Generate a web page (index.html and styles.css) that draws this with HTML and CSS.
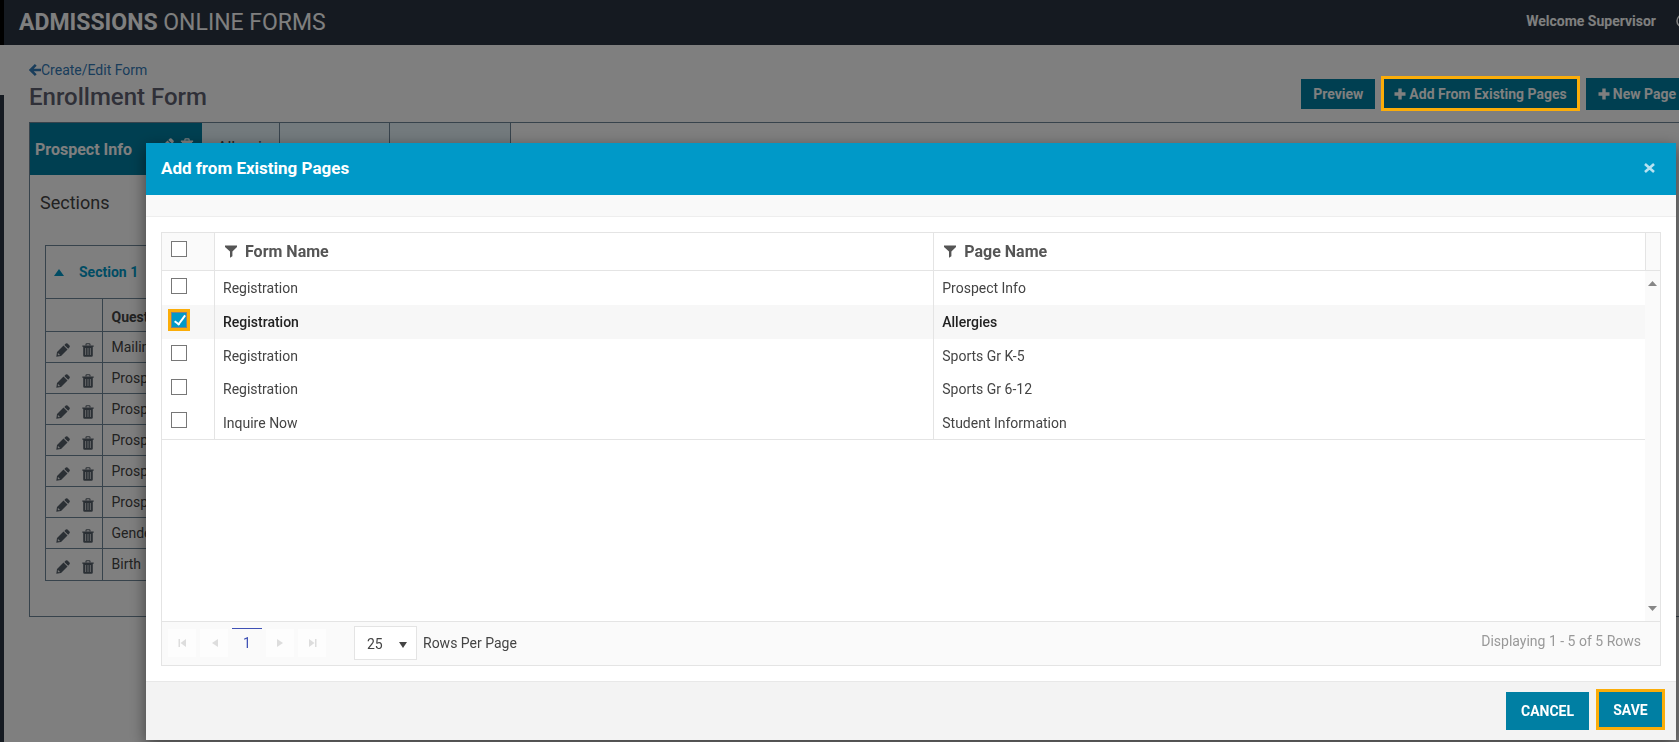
FILE: index.html
```html
<!DOCTYPE html>
<html lang="en">
<head>
  <meta charset="UTF-8">
  <meta name="viewport" content="width=device-width, initial-scale=1.0">
  <title>Admissions Online Forms</title>
  <link rel="stylesheet" href="styles.css">
</head>
<body>
  <!-- shared icons -->
  <svg class="icon-defs" aria-hidden="true">
    <symbol id="icon-pencil" viewBox="0 0 14 14">
      <path d="M0.3 13.7 L1 9 L7.5 2.6 L11.5 6.5 L5 13 Z M8.3 1.9 L9.8 0.6 Q10.6 -0.1 11.5 0.6 L13.5 2.5 Q14.2 3.3 13.5 4.2 L12.2 5.7 Z" fill="currentColor"/>
      <path d="M1.9 10.6 L3.4 12.1" stroke="#ffffff" stroke-width="1.1" fill="none"/>
    </symbol>
    <symbol id="icon-trash" viewBox="0 0 12 14">
      <path d="M4 2.5 V1.6 Q4 0.8 4.8 0.8 H7.2 Q8 0.8 8 1.6 V2.5" fill="none" stroke="currentColor" stroke-width="1.1"/>
      <path d="M0.3 2.4 H11.7 V3.8 H10.8 V12.4 Q10.8 13.7 9.5 13.7 H2.5 Q1.2 13.7 1.2 12.4 V3.8 H0.3 Z" fill="currentColor"/>
      <path d="M3.6 5 V12 M6 5 V12 M8.4 5 V12" stroke="#ffffff" stroke-width="0.7"/>
    </symbol>
    <symbol id="icon-plus" viewBox="0 0 12 12">
      <path d="M4.3 0.5 H7.7 V4.3 H11.5 V7.7 H7.7 V11.5 H4.3 V7.7 H0.5 V4.3 H4.3 Z" fill="currentColor"/>
    </symbol>
    <symbol id="icon-filter" viewBox="0 0 12 13">
      <path d="M0 0.5 H12 V2 L7.4 6.6 V11.2 L5 12.8 V6.6 L0 2 Z" fill="currentColor"/>
    </symbol>
  </svg>

  <div class="app">
    <div class="rail"></div>
    <div class="page">
      <header class="topbar">
        <div class="brand"><b>ADMISSIONS</b> ONLINE FORMS</div>
        <div class="user">
          <span>Welcome Supervisor</span>
          <svg width="12" height="14" viewBox="0 0 12 14"><circle cx="7" cy="7" r="6" fill="none" stroke="currentColor" stroke-width="1.5"/></svg>
        </div>
      </header>

      <main class="content">
        <div class="page-head">
          <div>
            <a class="back" href="#"><svg width="12" height="12" viewBox="0 0 12 12"><path d="M6.8 0.9 L1.6 6 L6.8 11.1 M2 6 H12" fill="none" stroke="currentColor" stroke-width="2.6"/></svg>Create/Edit Form</a>
            <h1>Enrollment Form</h1>
          </div>
          <div class="actions">
            <button class="btn btn-preview">Preview</button>
            <button class="btn btn-existing"><svg width="12" height="12"><use href="#icon-plus"/></svg>Add From Existing Pages</button>
            <button class="btn btn-new"><svg width="12" height="12"><use href="#icon-plus"/></svg>New Page</button>
          </div>
        </div>

        <div class="panel">
          <div class="tabs">
            <div class="tab active">Prospect Info
              <span class="tab-icons">
                <svg width="14" height="14"><use href="#icon-pencil"/></svg>
                <svg width="14" height="15"><use href="#icon-trash"/></svg>
              </span>
            </div>
            <div class="tab tab-short">Allergies</div>
            <div class="tab tab-mid"></div>
            <div class="tab tab-long"></div>
          </div>
          <h2>Sections</h2>
          <div class="section">
            <div class="section-title"><span class="caret-up"></span>Section 1</div>
            <table class="questions">
              <thead>
                <tr><th class="tools"></th><th>Question</th></tr>
              </thead>
              <tbody>
                <tr><td class="tools"><svg width="14" height="14"><use href="#icon-pencil"/></svg><svg width="12" height="14"><use href="#icon-trash"/></svg></td><td>Mailing</td></tr>
                <tr><td class="tools"><svg width="14" height="14"><use href="#icon-pencil"/></svg><svg width="12" height="14"><use href="#icon-trash"/></svg></td><td>Prospect</td></tr>
                <tr><td class="tools"><svg width="14" height="14"><use href="#icon-pencil"/></svg><svg width="12" height="14"><use href="#icon-trash"/></svg></td><td>Prospect</td></tr>
                <tr><td class="tools"><svg width="14" height="14"><use href="#icon-pencil"/></svg><svg width="12" height="14"><use href="#icon-trash"/></svg></td><td>Prospect</td></tr>
                <tr><td class="tools"><svg width="14" height="14"><use href="#icon-pencil"/></svg><svg width="12" height="14"><use href="#icon-trash"/></svg></td><td>Prospect</td></tr>
                <tr><td class="tools"><svg width="14" height="14"><use href="#icon-pencil"/></svg><svg width="12" height="14"><use href="#icon-trash"/></svg></td><td>Prospect</td></tr>
                <tr><td class="tools"><svg width="14" height="14"><use href="#icon-pencil"/></svg><svg width="12" height="14"><use href="#icon-trash"/></svg></td><td>Gender</td></tr>
                <tr><td class="tools"><svg width="14" height="14"><use href="#icon-pencil"/></svg><svg width="12" height="14"><use href="#icon-trash"/></svg></td><td>Birth</td></tr>
              </tbody>
            </table>
          </div>
        </div>
      </main>
    </div>
  </div>

  <div class="backdrop"></div>

  <div class="modal" role="dialog" aria-labelledby="modal-title">
    <div class="modal-header">
      <h3 id="modal-title">Add from Existing Pages</h3>
      <button class="close" aria-label="Close"><svg width="11" height="10" viewBox="0 0 11 10"><path d="M1 1 L10 9 M10 1 L1 9" stroke="currentColor" stroke-width="2.6"/></svg></button>
    </div>
    <div class="modal-strip"></div>

    <div class="modal-body">
      <div class="grid">
        <div class="grid-content">
          <div class="grid-rows">
            <table class="pages">
              <thead>
                <tr>
                  <th class="check"><input type="checkbox" aria-label="Select all"></th>
                  <th class="form-name"><span><svg width="12" height="13"><use href="#icon-filter"/></svg>Form Name</span></th>
                  <th><span><svg width="12" height="13"><use href="#icon-filter"/></svg>Page Name</span></th>
                </tr>
              </thead>
              <tbody>
                <tr>
                  <td class="check"><input type="checkbox" aria-label="Prospect Info"></td>
                  <td>Registration</td>
                  <td>Prospect Info</td>
                </tr>
                <tr class="selected">
                  <td class="check"><input type="checkbox" aria-label="Allergies" checked></td>
                  <td>Registration</td>
                  <td>Allergies</td>
                </tr>
                <tr>
                  <td class="check"><input type="checkbox" aria-label="Sports Gr K-5"></td>
                  <td>Registration</td>
                  <td>Sports Gr K-5</td>
                </tr>
                <tr>
                  <td class="check"><input type="checkbox" aria-label="Sports Gr 6-12"></td>
                  <td>Registration</td>
                  <td>Sports Gr 6-12</td>
                </tr>
                <tr>
                  <td class="check"><input type="checkbox" aria-label="Student Information"></td>
                  <td>Inquire Now</td>
                  <td>Student Information</td>
                </tr>
              </tbody>
            </table>
          </div>
          <div class="scrollbar">
            <div class="scroll-head"></div>
            <div class="scroll-track">
              <svg width="9" height="5" viewBox="0 0 9 5"><path d="M0 5 L4.5 0 L9 5 Z" fill="#868686"/></svg>
              <svg width="9" height="5" viewBox="0 0 9 5"><path d="M0 0 L4.5 5 L9 0 Z" fill="#868686"/></svg>
            </div>
          </div>
        </div>

        <div class="pager">
          <div class="pager-buttons">
            <button aria-label="First page" disabled><svg width="9" height="8" viewBox="0 0 9 8"><path d="M0.5 0 H2 V8 H0.5 Z M8 0 V8 L2.5 4 Z" fill="currentColor"/></svg></button>
            <button aria-label="Previous page" disabled><svg width="9" height="8" viewBox="0 0 9 8"><path d="M8 0 V8 L2 4 Z" fill="currentColor"/></svg></button>
            <button class="current">1</button>
            <button aria-label="Next page" disabled><svg width="9" height="8" viewBox="0 0 9 8"><path d="M1 0 V8 L7 4 Z" fill="currentColor"/></svg></button>
            <button aria-label="Last page" disabled><svg width="9" height="8" viewBox="0 0 9 8"><path d="M1 0 V8 L6.5 4 Z M7 0 H8.5 V8 H7 Z" fill="currentColor"/></svg></button>
          </div>
          <div class="page-size">
            <select id="page-size"><option>25</option></select>
            <svg width="8" height="6" viewBox="0 0 8 6"><path d="M0 0 H8 L4 6 Z" fill="#444444"/></svg>
          </div>
          <label for="page-size">Rows Per Page</label>
          <span class="pager-info">Displaying 1 - 5 of 5 Rows</span>
        </div>
      </div>
    </div>

    <div class="modal-footer">
      <button class="btn btn-cancel">CANCEL</button>
      <button class="btn btn-save">SAVE</button>
    </div>
  </div>
</body>
</html>
```

FILE: styles.css
```css
* {
  box-sizing: border-box;
}
body {
  margin: 0;
  font-family: Roboto, "Liberation Sans", sans-serif;
  font-size: 14px;
  line-height: 20px;
  color: #444;
  background: #fff;
  overflow: hidden;
}
h1, h2, h3 {
  margin: 0;
  font-weight: 400;
}
button, select, input {
  font-family: inherit;
  font-size: inherit;
  margin: 0;
}
svg {
  flex: none;
}
.icon-defs {
  position: absolute;
  width: 0;
  height: 0;
}

/* page behind the dialog */
.app {
  display: flex;
  height: 100vh;
}
.rail {
  width: 4px;
  flex: none;
  background: linear-gradient(#000 45px, #fff 45px, #fff 95px, #2a3542 95px);
}
/* the page is a little wider than the window and runs off to the right */
.page {
  flex: none;
  width: calc(100% + 5px);
}
.topbar {
  height: 45px;
  padding-left: 15px;
  display: flex;
  align-items: center;
  justify-content: space-between;
  background: #2a3542;
  color: #fff;
}
.brand {
  font-size: 23px;
  line-height: 28px;
}
.brand b {
  font-weight: 700;
}
.user {
  display: flex;
  align-items: center;
  gap: 20px;
  padding-bottom: 4px;
  font-weight: 700;
}
.content {
  padding: 15px 0 0 25px;
}
.page-head {
  display: flex;
  justify-content: space-between;
  height: 62px;
}
.back {
  display: flex;
  align-items: center;
  color: #337ab7;
  text-decoration: none;
}
.page-head h1 {
  font-size: 24px;
  line-height: 34px;
  font-weight: 500;
  color: #5f6170;
}
.actions {
  display: flex;
  align-items: center;
  gap: 6px;
  height: 67px;
}
.btn {
  display: flex;
  align-items: center;
  justify-content: center;
  gap: 3px;
  border: 0;
  padding: 0 12px;
  background: #007fa3;
  color: #fff;
  font-weight: 700;
  white-space: nowrap;
}
.btn-preview {
  height: 30px;
}
/* highlighted button shows through the backdrop */
.btn-existing {
  position: relative;
  z-index: 11;
  height: 35px;
  padding: 0 10px;
  border: 3px solid #fbad09;
  background: #004051;
  color: #808080;
}
.btn-new {
  height: 32px;
}
.panel {
  border: 1px solid #6f8799;
  height: 495px;
}
.tabs {
  display: flex;
  height: 52px;
}
.tab {
  display: flex;
  align-items: center;
  justify-content: space-between;
  padding: 0 15px 2px;
  font-size: 16px;
  background: #e6f4fa;
  border-right: 1px solid #6f8799;
}
.tab.active {
  width: 172px;
  padding: 2px 8px 0 5px;
  font-weight: 700;
  color: #fff;
  background: #007fa3;
  border-right: 0;
}
.tab-icons {
  display: flex;
  gap: 6px;
  padding-bottom: 10px;
}
.tab-short {
  width: 78px;
}
.tab-mid {
  width: 110px;
}
.tab-long {
  width: 121px;
}
.panel h2 {
  padding: 17px 10px;
  font-size: 18px;
  line-height: 22px;
  color: #444;
}
.section {
  margin: 14px 15px 0;
  border: 1px solid #6f8799;
}
.section-title {
  display: flex;
  align-items: center;
  gap: 15px;
  height: 52px;
  padding-left: 8px;
  color: #0099c8;
  font-weight: 700;
}
.caret-up {
  border: 5px solid transparent;
  border-top: 0;
  border-bottom: 7px solid #0099c8;
}
.questions {
  width: 100%;
  border-collapse: collapse;
}
.questions th, .questions td {
  height: 31px;
  padding: 0 9px;
  text-align: left;
  border-top: 1px solid #6f8799;
}
.questions th {
  height: 33px;
  padding-top: 3px;
  font-weight: 700;
}
.questions .tools {
  width: 56px;
  padding: 3px 0 0 10px;
  border-right: 1px solid #6f8799;
  color: #57616b;
}
.tools svg {
  display: inline-block;
  vertical-align: middle;
  margin-right: 12px;
}
.tools svg:last-child {
  margin-right: 0;
}

.backdrop {
  position: fixed;
  inset: 0;
  z-index: 10;
  background: rgba(0, 0, 0, 0.5);
}

/* dialog */
.modal {
  position: fixed;
  inset: 143px 3px 2px 146px;
  z-index: 20;
  display: flex;
  flex-direction: column;
  background: #fff;
  box-shadow: 0 5px 15px rgba(0, 0, 0, 0.5);
}
.modal-header {
  height: 52px;
  padding: 0 20px 2px 15px;
  display: flex;
  align-items: center;
  justify-content: space-between;
  background: #0099c8;
  color: #fff;
}
.modal-header h3 {
  font-size: 17px;
  font-weight: 700;
}
.close {
  display: flex;
  padding: 1px;
  border: 0;
  background: none;
  color: #b8e2f1;
}
.modal-strip {
  height: 22px;
  background: #f9f9f9;
  border-bottom: 1px solid #eee;
}
.modal-body {
  flex: 1;
  display: flex;
  padding: 15px;
}
.grid {
  flex: 1;
  display: flex;
  flex-direction: column;
  border: 1px solid #e4e4e4;
}
.grid-content {
  flex: 1;
  display: flex;
}
.grid-rows {
  flex: 1;
}
.pages {
  width: 100%;
  table-layout: fixed;
  border-collapse: separate;
  border-spacing: 0;
}
.pages th, .pages td {
  padding: 0 8px;
  text-align: left;
  vertical-align: middle;
}
.pages th + th, .pages td + td {
  border-left: 1px solid #e4e4e4;
}
.pages th {
  height: 38px;
  font-size: 16px;
  font-weight: 700;
  color: #555;
  border-bottom: 1px solid #e4e4e4;
}
.pages th span {
  display: flex;
  align-items: center;
  gap: 8px;
  padding-left: 2px;
}
.pages td {
  height: 34px;
}
.pages tbody tr:nth-child(3) td {
  height: 33px;
}
.pages tbody tr:last-child td {
  border-bottom: 1px solid #e4e4e4;
}
.pages .check {
  width: 52px;
  padding: 0 0 5px 9px;
}
.pages th.check {
  background: #fafafa;
}
.pages .form-name {
  width: 48.5%;
}
.pages .selected td {
  background: #f7f7f7;
  color: #222;
  font-weight: 500;
}
.check input {
  display: block;
  appearance: none;
  width: 16px;
  height: 16px;
  border: 1px solid #777;
  background: #fff;
}
.check input:checked {
  border-color: #7b8388;
  outline: 3px solid #fbad09;
  background: #0099c8;
}
.check input:checked::after {
  content: "";
  display: block;
  box-sizing: border-box;
  width: 6px;
  height: 12px;
  margin-left: 5px;
  border: solid #fff;
  border-width: 0 2px 2px 0;
  transform: rotate(36deg);
}
.scrollbar {
  display: flex;
  flex-direction: column;
  width: 15px;
  background: #fafafa;
}
.scroll-head {
  height: 38px;
  border-left: 1px solid #e4e4e4;
  border-bottom: 1px solid #e4e4e4;
}
.scroll-track {
  flex: 1;
  display: flex;
  flex-direction: column;
  align-items: center;
  justify-content: space-between;
  padding: 10px 0;
}
.pager {
  display: flex;
  align-items: center;
  height: 44px;
  padding: 0 19px 2px 6px;
  background: #fafafa;
  border-top: 1px solid #e4e4e4;
}
.pager-buttons {
  display: flex;
  gap: 4px;
  margin-right: 28px;
}
.pager-buttons button {
  display: flex;
  align-items: center;
  justify-content: center;
  width: 28px;
  height: 28px;
  padding: 0;
  border: 0;
  background: #fdfdfd;
  color: #ddd;
}
.pager-buttons .current {
  width: 30px;
  height: 29px;
  margin-top: -1px;
  border-top: 1px solid #3f51b5;
  background: none;
  color: #3f51b5;
}
.page-size {
  position: relative;
  margin-right: 6px;
}
.page-size select {
  display: block;
  appearance: none;
  width: 63px;
  height: 34px;
  padding: 2px 12px 0;
  border: 1px solid #e4e4e4;
  border-radius: 0;
  background: #fff;
  color: #444;
}
.page-size svg {
  position: absolute;
  top: 16px;
  right: 10px;
  pointer-events: none;
}
.pager-info {
  margin-left: auto;
  padding-bottom: 4px;
  color: #999;
}
.modal-footer {
  height: 59px;
  display: flex;
  align-items: flex-start;
  justify-content: flex-end;
  gap: 7px;
  padding: 7px 11px;
  background: #f3f3f3;
  border-top: 1px solid #e8e8e8;
}
.btn-cancel {
  width: 83px;
  height: 38px;
  margin-top: 3px;
}
.btn-save {
  width: 69px;
  height: 41px;
  border: 3px solid #fbad09;
}
```
